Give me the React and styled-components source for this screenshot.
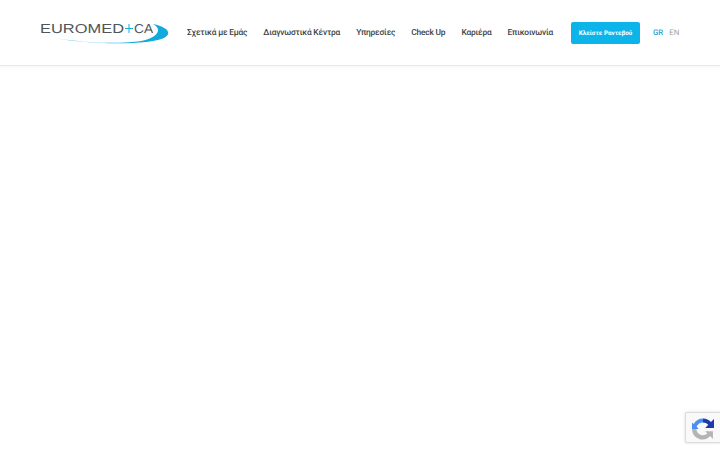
import React from "react";
import styled, { createGlobalStyle } from "styled-components";

const navItems = [
  "Σχετικά με Εμάς",
  "Διαγνωστικά Κέντρα",
  "Υπηρεσίες",
  "Check Up",
  "Καριέρα",
  "Επικοινωνία",
];

const Global = createGlobalStyle`
  html, body {
    margin: 0;
    padding: 0;
    height: 100%;
    overflow: hidden;
    background: #fff;
    font-family: Roboto, "Noto Sans", sans-serif;
    text-rendering: geometricPrecision;
  }
`;

const Page = styled.div`
  position: relative;
  width: 720px;
  height: 450px;
  background: #fff;
`;

const Header = styled.header`
  display: flex;
  align-items: center;
  height: 66px;
  padding: 0 43px 0 40px;
  box-sizing: border-box;
  border-bottom: 1px solid #e8e8e8;
  box-shadow: 0 1px 2px rgba(0, 0, 0, 0.03);
`;

const LogoSvg = styled.svg`
  display: block;
  width: 130px;
  height: 26px;
  flex: none;
`;

const Nav = styled.nav`
  display: flex;
  align-items: center;
  gap: 16px;
  margin-left: 17px;
  flex: none;
`;

const NavLink = styled.a`
  font-size: 8.4px;
  font-weight: 500;
  letter-spacing: -0.19px;
  color: #3a3f45;
  white-space: nowrap;
`;

const Cta = styled.a`
  display: flex;
  align-items: center;
  justify-content: center;
  flex: none;
  width: 69px;
  height: 22px;
  margin-left: 18px;
  border-radius: 2px;
  background: #0db4ea;
  color: #fff;
  font-size: 6.3px;
  font-weight: 700;
  white-space: nowrap;
`;

const Langs = styled.div`
  display: flex;
  gap: 6px;
  margin-left: 13px;
  flex: none;
`;

const Lang = styled.a`
  font-size: 7.8px;
  font-weight: ${(p) => (p.$active ? 500 : 400)};
  color: ${(p) => (p.$active ? "#1aa6d6" : "#9a9fa5")};
`;

const Recaptcha = styled.div`
  position: absolute;
  left: 685px;
  top: 412px;
  width: 35px;
  height: 31px;
  display: flex;
  align-items: center;
  justify-content: center;
  box-sizing: border-box;
  padding-top: 2px;
  background: #f9f9f9;
  border: 1px solid #dcdcdc;
  border-right: none;
  border-radius: 2px 0 0 2px;
  box-shadow: 0 0 3px rgba(0, 0, 0, 0.15);
`;

const Logo = () => (
  <LogoSvg viewBox="0 0 130 26">
    <g fontFamily="Liberation Sans, sans-serif" fontSize="13" fill="#50555a">
      <text x="0" y="13" textLength="84" lengthAdjust="spacingAndGlyphs">
        EUROMED
      </text>
      <text x="94" y="13" textLength="19" lengthAdjust="spacingAndGlyphs">
        CA
      </text>
    </g>
    <path d="M85 8.5h8M89 4v9" stroke="#12a9dc" strokeWidth="1" fill="none" />
    <path
      d="M1 15.5 C 30 22, 70 24.5, 98 21.5 C 116 19, 124 10, 113 4 C 127 7, 133 13, 124 18 C 108 25, 50 26, 1 15.5 Z"
      fill="#12a9dc"
    />
  </LogoSvg>
);

const RecaptchaIcon = () => (
  <svg width="22" height="22" viewBox="0 0 20 20">
    <path d="M10 0.5a9.5 9.5 0 0 0-8.4 5L0 4v6h6L4.2 7.8A6.5 6.5 0 0 1 10 4z" fill="#4a90f2" />
    <path d="M10 0.5a9.5 9.5 0 0 1 7.2 3.2L20 1v8h-8l2.8-2.8A6.5 6.5 0 0 0 10 4z" fill="#1c3aa9" />
    <path d="M0 10h4a6 6 0 0 0 10 4l-2-2h7v7l-2.5-2.6A9.5 9.5 0 0 1 0 10z" fill="#b4b4b4" />
  </svg>
);

const App = () => {
  return (
    <Page>
      <Global />
      <Header>
        <Logo />
        <Nav>
          {navItems.map((item) => (
            <NavLink key={item}>{item}</NavLink>
          ))}
        </Nav>
        <Cta>Κλείστε Ραντεβού</Cta>
        <Langs>
          <Lang $active>GR</Lang>
          <Lang>EN</Lang>
        </Langs>
      </Header>
      <Recaptcha>
        <RecaptchaIcon />
      </Recaptcha>
    </Page>
  );
};

export default App;
